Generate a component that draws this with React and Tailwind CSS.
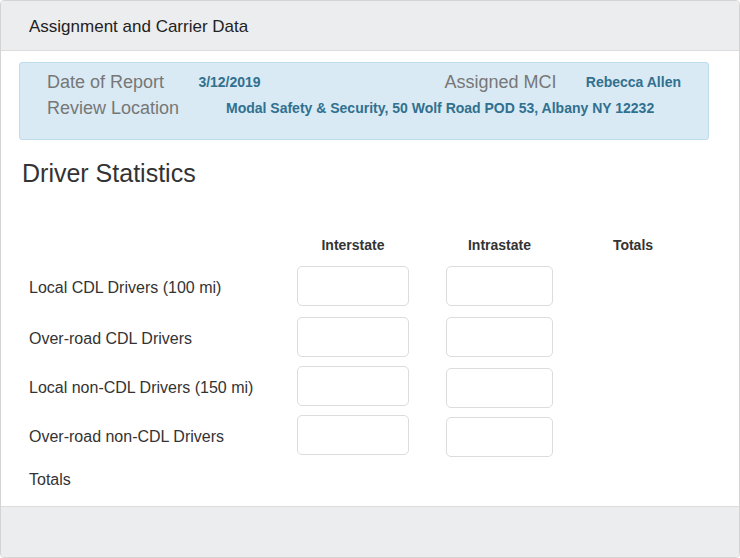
export default function App() {
  const rows = [
    { label: "Local CDL Drivers (100 mi)", mt: "mt-[11px]", shift: "" },
    { label: "Over-road CDL Drivers", mt: "mt-[11px]", shift: "" },
    { label: "Local non-CDL Drivers (150 mi)", mt: "mt-[9px]", shift: "mt-[2px]" },
    { label: "Over-road non-CDL Drivers", mt: "mt-[7px]", shift: "mt-[2px]" },
  ];

  return (
    <div className="w-[740px] h-[558px] bg-white font-['Liberation_Sans',Arial,sans-serif] text-[#333]">
      <div className="h-full flex flex-col border border-[#d4d4d4] rounded-[4px] overflow-hidden">
        {/* Card header */}
        <div className="h-[50px] shrink-0 flex items-center px-[28px] pt-[2px] bg-[#ecedef] border-b border-[#dcdcdc] text-[17px] text-[#222]">
          Assignment and Carrier Data
        </div>

        <div className="flex-1 flex flex-col">
          {/* Assignment info */}
          <div className="mt-[11px] ml-[18px] mr-[30px] h-[78px] bg-[#d9eaf4] border border-[#bfdcec] rounded-[3px] px-[27px] pt-[6px]">
            <div className="flex items-center h-[26px] whitespace-nowrap">
              <span className="w-[152px] text-[18px] text-[#777] font-light">Date of Report</span>
              <span className="w-[247px] text-[14px] font-bold text-[#31708f]">3/12/2019</span>
              <span className="w-[142px] text-[18px] text-[#777] font-light">Assigned MCI</span>
              <span className="text-[14px] font-bold text-[#31708f]">Rebecca Allen</span>
            </div>
            <div className="flex items-center h-[26px] whitespace-nowrap">
              <span className="w-[179px] text-[18px] text-[#777] font-light">Review Location</span>
              <span className="text-[14px] font-bold text-[#31708f]">
                Modal Safety &amp; Security, 50 Wolf Road POD 53, Albany NY 12232
              </span>
            </div>
          </div>

          <h2 className="mt-[18px] ml-[21px] text-[25px] leading-[30px] text-[#333]">Driver Statistics</h2>

          {/* Stats table */}
          <div className="mt-[47px] pl-[28px]">
            <div className="flex items-center h-[20px] text-[14px] font-bold text-[#333]">
              <span className="w-[268px]" />
              <span className="w-[112px] text-center">Interstate</span>
              <span className="w-[37px]" />
              <span className="w-[107px] text-center">Intrastate</span>
              <span className="w-[160px] text-center">Totals</span>
            </div>

            {rows.map((r) => (
              <div key={r.label} className={`flex items-start ${r.mt}`}>
                <span className="w-[268px] h-[40px] pt-[3px] flex items-center text-[16px] text-[#333]">{r.label}</span>
                <input
                  type="text"
                  className="w-[112px] h-[40px] border border-[#dcdcdc] rounded-[5px] bg-white outline-none"
                />
                <span className="w-[37px]" />
                <input
                  type="text"
                  className={`w-[107px] h-[40px] border border-[#dcdcdc] rounded-[5px] bg-white outline-none ${r.shift}`}
                />
              </div>
            ))}

            <div className="mt-[13px] text-[16px] leading-[20px] text-[#333]">Totals</div>
          </div>
        </div>

        {/* Card footer */}
        <div className="h-[51px] shrink-0 bg-[#ecedef] border-t border-[#dcdcdc]" />
      </div>
    </div>
  );
}
